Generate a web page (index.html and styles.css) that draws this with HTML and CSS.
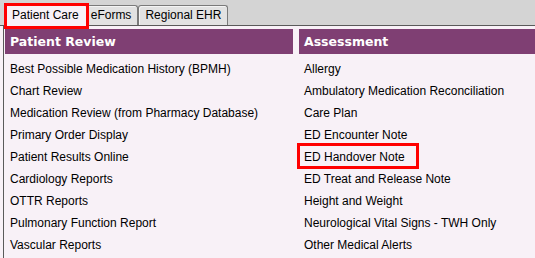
FILE: index.html
```html
<!DOCTYPE html>
<html>
<head>
<meta charset="utf-8">
<link rel="stylesheet" href="styles.css">
</head>
<body>
<div class="tabs">
  <div class="tab active marked">Patient Care</div>
  <div class="tab">eForms</div>
  <div class="tab">Regional EHR</div>
</div>
<div class="panel">
  <div class="col">
    <div class="head">Patient Review</div>
    <ul class="list">
      <li>Best Possible Medication History (BPMH)</li>
      <li>Chart Review</li>
      <li>Medication Review (from Pharmacy Database)</li>
      <li>Primary Order Display</li>
      <li>Patient Results Online</li>
      <li>Cardiology Reports</li>
      <li>OTTR Reports</li>
      <li>Pulmonary Function Report</li>
      <li>Vascular Reports</li>
    </ul>
  </div>
  <div class="col">
    <div class="head">Assessment</div>
    <ul class="list">
      <li>Allergy</li>
      <li>Ambulatory Medication Reconciliation</li>
      <li>Care Plan</li>
      <li>ED Encounter Note</li>
      <li><span class="marked-item">ED Handover Note</span></li>
      <li>ED Treat and Release Note</li>
      <li>Height and Weight</li>
      <li>Neurological Vital Signs - TWH Only</li>
      <li>Other Medical Alerts</li>
    </ul>
  </div>
</div>
</body>
</html>
```

FILE: styles.css
```css
html, body {
  margin: 0;
  padding: 0;
  height: 100%;
  overflow: hidden;
}
body {
  background: #f8f1f7;
  font-family: "Liberation Sans", Arial, sans-serif;
  font-size: 12px;
  color: #000;
  display: flex;
  flex-direction: column;
}
.tabs {
  display: flex;
  align-items: flex-end;
  height: 25px;
  padding-left: 5px;
  background: #d4d4d4;
  border-bottom: 1px solid #5a5a5a;
}
.tab {
  height: 19px;
  line-height: 19px;
  padding: 0 6px;
  background: #e2e2e2;
  border: 1px solid #7a7a7a;
  border-bottom: none;
  border-radius: 3px 3px 0 0;
  box-shadow: inset 1px 1px 0 #f4f4f4;
}
.tab.active {
  position: relative;
  z-index: 1;
  height: 21px;
  line-height: 21px;
  margin-bottom: -1px;
  margin-right: -3px;
  padding: 0 7px 0 6px;
  background: #f8f1f7;
  box-shadow: none;
}
.marked::after {
  content: "";
  position: absolute;
  left: -2px;
  right: -3px;
  top: -2px;
  bottom: -3px;
  border: 3px solid #f00;
}
.panel {
  flex: 1;
  margin-left: 3px;
  border-left: 1px solid #5a5a5a;
  padding: 3px 0 0 1px;
  display: grid;
  grid-template-columns: 288px 1fr;
  column-gap: 6px;
  align-content: start;
}
.head {
  height: 25px;
  line-height: 25px;
  background: #7f3f73;
  color: #fff;
  font-family: "DejaVu Sans", Verdana, sans-serif;
  font-weight: bold;
  font-size: 12.5px;
  padding-left: 5px;
}
.list {
  list-style: none;
  margin: 0;
  padding: 4px 0 0 5px;
}
.list li {
  height: 22px;
  line-height: 22px;
  white-space: nowrap;
}
.marked-item {
  position: relative;
  display: inline-block;
}
.marked-item::after {
  content: "";
  position: absolute;
  left: -7px;
  right: -14px;
  top: -3px;
  bottom: -1px;
  border: 3px solid #f00;
}
```
